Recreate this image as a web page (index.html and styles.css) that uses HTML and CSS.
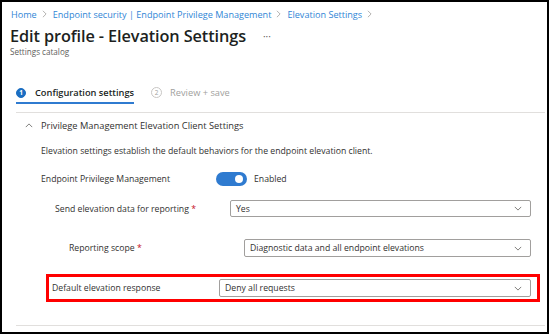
FILE: index.html
```html
<!DOCTYPE html>
<html lang="en">
<head>
    <meta charset="UTF-8">
    <title>Edit profile - Elevation Settings</title>
    <link rel="stylesheet" href="styles.css">
</head>
<body>
    <div class="frame">
        <!-- Breadcrumb -->
        <nav class="breadcrumb">
            <a>Home</a>
            <svg class="crumb-sep" viewBox="0 0 6 10"><path d="M1 1l4 4-4 4" /></svg>
            <a>Endpoint security | Endpoint Privilege Management</a>
            <svg class="crumb-sep" viewBox="0 0 6 10"><path d="M1 1l4 4-4 4" /></svg>
            <a>Elevation Settings</a>
            <svg class="crumb-sep" viewBox="0 0 6 10"><path d="M1 1l4 4-4 4" /></svg>
        </nav>

        <div class="title-row">
            <h1>Edit profile - Elevation Settings</h1>
            <span class="more">···</span>
        </div>
        <div class="subtitle">Settings catalog</div>

        <!-- Wizard tabs -->
        <div class="tabs">
            <div class="tab active"><span class="step">1</span>Configuration settings</div>
            <div class="tab"><span class="step">2</span>Review + save</div>
        </div>

        <div class="section">
            <div class="section-head">
                <svg class="collapse" viewBox="0 0 10 6"><path d="M1 5l4-4 4 4" /></svg>
                Privilege Management Elevation Client Settings
            </div>
            <p class="desc">Elevation settings establish the default behaviors for the endpoint elevation client.</p>

            <div class="row level0">
                <span class="label">Endpoint Privilege Management</span>
                <span class="toggle-wrap"><span class="toggle"></span>Enabled</span>
            </div>

            <div class="row level1">
                <span class="label">Send elevation data for reporting <b class="req">*</b></span>
                <div class="dropdown short">Yes<svg viewBox="0 0 10 6"><path d="M1 1l4 4 4-4" /></svg></div>
            </div>

            <div class="row level2">
                <span class="label">Reporting scope <b class="req">*</b></span>
                <div class="dropdown">Diagnostic data and all endpoint elevations<svg viewBox="0 0 10 6"><path d="M1 1l4 4 4-4" /></svg></div>
            </div>

            <div class="row highlight">
                <span class="label">Default elevation response</span>
                <div class="dropdown">Deny all requests<svg viewBox="0 0 10 6"><path d="M1 1l4 4 4-4" /></svg></div>
            </div>
        </div>
    </div>
</body>
</html>
```

FILE: styles.css
```css
body {
    margin: 0;
    font-family: "Open Sans", "Noto Sans", sans-serif;
    color: #323130;
    background: #fff;
}

.frame {
    box-sizing: border-box;
    width: 549px;
    height: 334px;
    border: 2px solid #000;
    padding: 5px 0 0 0;
}

/* Breadcrumb */
.breadcrumb {
    display: flex;
    align-items: center;
    height: 14px;
    padding-left: 9px;
    font-size: 9.1px;
    color: #2f86d6;
}

.breadcrumb a {
    color: #2f86d6;
}

.crumb-sep {
    width: 5px;
    height: 8px;
    margin: 0 6px 0 5px;
    fill: none;
    stroke: #a19f9d;
    stroke-width: 1;
}

/* Title */
.title-row {
    display: flex;
    align-items: center;
    padding-left: 8px;
    margin-top: 4px;
    height: 22px;
}

.title-row h1 {
    margin: 0;
    font-size: 16.3px;
    font-weight: 600;
    color: #201f1e;
    letter-spacing: -0.1px;
}

.more {
    margin-left: 17px;
    font-size: 10px;
    color: #605e5c;
}

.subtitle {
    padding-left: 8px;
    font-size: 8.1px;
    color: #605e5c;
    line-height: 10px;
}

/* Tabs */
.tabs {
    display: flex;
    margin: 26px 0 0 14px;
    gap: 17px;
}

.tab {
    display: flex;
    align-items: center;
    height: 19px;
    font-size: 9.25px;
    color: #a19f9d;
    border-bottom: 2px solid transparent;
}

.tab.active {
    color: #201f1e;
    font-weight: 600;
    border-bottom-color: #2f7bd0;
}

.step {
    box-sizing: border-box;
    display: inline-flex;
    align-items: center;
    justify-content: center;
    width: 11px;
    height: 11px;
    border-radius: 50%;
    border: 1px solid #c8c6c4;
    font-size: 6.5px;
    font-weight: 400;
    margin-right: 8px;
}

.tab.active .step {
    width: 10px;
    height: 10px;
    margin-right: 9px;
    background: #1b6ec2;
    border-color: #1b6ec2;
    color: #fff;
    font-weight: 700;
}

/* Section */
.section {
    box-sizing: border-box;
    margin: 8px 0 0 14px;
    width: 529px;
    height: 214px;
    border-top: 1px solid #e1dfdd;
    border-bottom: 1px solid #e1dfdd;
}

.section-head {
    display: flex;
    align-items: center;
    height: 24px;
    padding-left: 9px;
    font-size: 9.3px;
}

.collapse {
    width: 8px;
    height: 5px;
    margin-right: 8px;
    fill: none;
    stroke: #605e5c;
    stroke-width: 1;
}

.desc {
    margin: 7px 0 0 25px;
    font-size: 8.7px;
    line-height: 14px;
}

.row {
    display: grid;
    grid-template-columns: 175px 1fr;
    align-items: center;
    font-size: 8.7px;
    margin-right: 14px;
}

.level0 {
    min-height: 18px;
    padding-left: 25px;
    margin-top: 12px;
}

.level1 {
    padding-left: 39px;
    margin-top: 12px;
}

.level2 {
    padding-left: 53px;
    margin-top: 22px;
}

.highlight {
    grid-template-columns: 167px 1fr;
    margin: 17px 5px 0 30px;
    padding: 2px 6px 2px 3px;
    border: 3px solid #f00;
}

.req {
    color: #c50f1f;
    font-weight: 400;
}

.toggle-wrap {
    display: flex;
    align-items: center;
    gap: 7px;
}

.toggle {
    position: relative;
    width: 31px;
    height: 14px;
    border-radius: 7px;
    background: #2f7bd0;
}

.toggle::after {
    content: "";
    position: absolute;
    right: 4px;
    top: 3px;
    width: 8px;
    height: 8px;
    border-radius: 50%;
    background: #fff;
}

.dropdown {
    box-sizing: border-box;
    display: flex;
    align-items: center;
    justify-content: space-between;
    height: 18px;
    padding: 0 8px 0 5px;
    border: 1px solid #a19f9d;
    border-radius: 2px;
}

.dropdown.short {
    height: 17px;
}

.dropdown svg {
    width: 8px;
    height: 5px;
    fill: none;
    stroke: #605e5c;
    stroke-width: 1;
}
```
